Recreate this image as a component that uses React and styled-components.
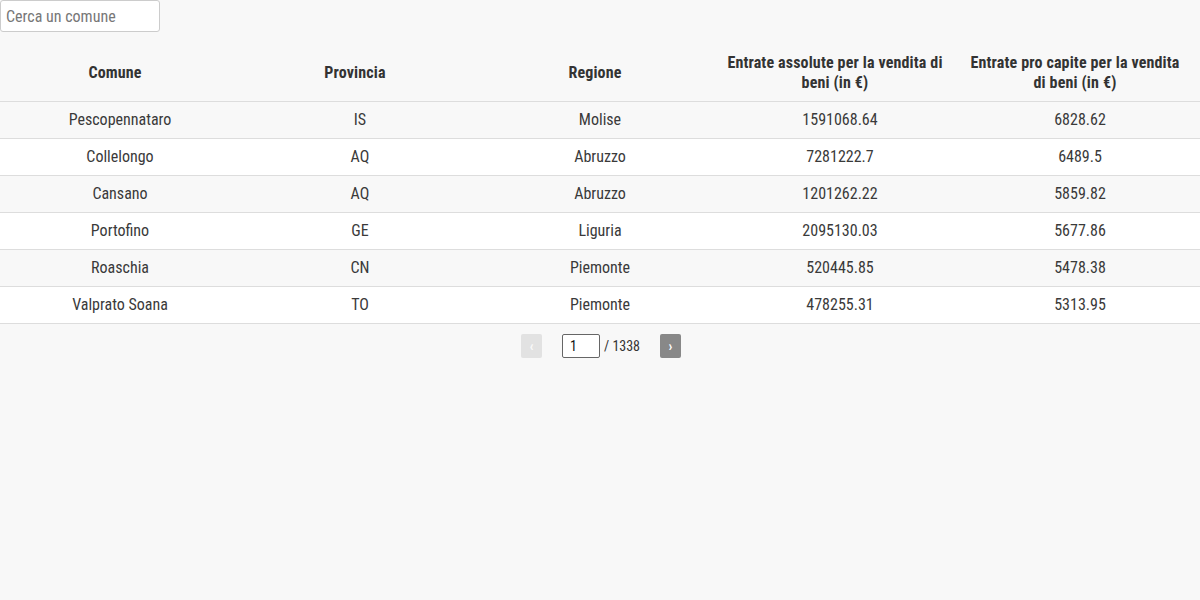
import React, { useState } from 'react';
import styled, { createGlobalStyle } from 'styled-components';

const GlobalStyle = createGlobalStyle`
  html, body {
    margin: 0;
    padding: 0;
    background: #f8f8f8;
  }
  body {
    font-family: "Roboto Condensed", Roboto, "Liberation Sans", sans-serif;
    font-stretch: 75%;
    color: #333;
  }
`;

const Page = styled.div`
  width: 1200px;
  min-height: 600px;
  background: #f8f8f8;
`;

const SearchInput = styled.input`
  display: block;
  box-sizing: border-box;
  width: 160px;
  height: 32px;
  margin: 0 0 10px;
  padding: 0 5px;
  border: 1px solid #ccc;
  border-radius: 3px;
  background: #fff;
  font-family: inherit;
  font-stretch: 75%;
  font-size: 16px;
  color: #333;

  &::placeholder {
    color: #777;
  }
`;

const Table = styled.table`
  width: 100%;
  border-collapse: collapse;
  table-layout: fixed;
`;

const HeadCell = styled.th`
  box-sizing: border-box;
  height: 59px;
  padding: 3px 15px 0 5px;
  font-size: 16px;
  font-weight: 700;
  letter-spacing: 0.15px;
  line-height: 20px;
  color: #333;
  text-align: center;
  border-bottom: 1px solid #ddd;
`;

const Row = styled.tr`
  background: ${(p) => (p.$odd ? '#fff' : '#f8f8f8')};
  border-bottom: 1px solid #ddd;
`;

const Cell = styled.td`
  box-sizing: border-box;
  height: 37px;
  padding: 0 5px;
  font-size: 16px;
  color: #3a3a3a;
  text-align: center;
`;

const Pager = styled.div`
  display: flex;
  align-items: center;
  justify-content: center;
  padding-top: 10px;
  padding-left: 2px;
  font-size: 14px;
  color: #333;
`;

const PageButton = styled.button`
  box-sizing: border-box;
  width: 21px;
  height: 24px;
  padding: 0;
  border: none;
  border-radius: 2px;
  background: ${(p) => (p.disabled ? '#e2e2e2' : '#888')};
  color: ${(p) => (p.disabled ? '#fafafa' : '#fff')};
  font-family: inherit;
  font-size: 14px;
  font-weight: 700;
  cursor: ${(p) => (p.disabled ? 'default' : 'pointer')};
`;

const PageInput = styled.input`
  box-sizing: border-box;
  width: 38px;
  height: 24px;
  margin-left: 20px;
  padding: 0 7px;
  border: 1px solid #666;
  border-radius: 2px;
  background: #fff;
  font-family: inherit;
  font-stretch: 75%;
  font-size: 14px;
  color: #111;
  outline: none;
`;

const Total = styled.span`
  margin: 0 20px 0 4px;
`;

const rows = [
  ['Pescopennataro', 'IS', 'Molise', '1591068.64', '6828.62'],
  ['Collelongo', 'AQ', 'Abruzzo', '7281222.7', '6489.5'],
  ['Cansano', 'AQ', 'Abruzzo', '1201262.22', '5859.82'],
  ['Portofino', 'GE', 'Liguria', '2095130.03', '5677.86'],
  ['Roaschia', 'CN', 'Piemonte', '520445.85', '5478.38'],
  ['Valprato Soana', 'TO', 'Piemonte', '478255.31', '5313.95'],
];

export default function App() {
  const [page, setPage] = useState('1');
  return (
    <Page>
      <GlobalStyle />
      <SearchInput placeholder="Cerca un comune" />
      <Table>
        <thead>
          <tr>
            <HeadCell>Comune</HeadCell>
            <HeadCell>Provincia</HeadCell>
            <HeadCell>Regione</HeadCell>
            <HeadCell>Entrate assolute per la vendita di beni (in €)</HeadCell>
            <HeadCell>Entrate pro capite per la vendita di beni (in €)</HeadCell>
          </tr>
        </thead>
        <tbody>
          {rows.map((r, i) => (
            <Row key={r[0]} $odd={i % 2 === 1}>
              {r.map((v, j) => (
                <Cell key={j}>{v}</Cell>
              ))}
            </Row>
          ))}
        </tbody>
      </Table>
      <Pager>
        <PageButton disabled>‹</PageButton>
        <PageInput value={page} onChange={(e) => setPage(e.target.value)} />
        <Total>/ 1338</Total>
        <PageButton>›</PageButton>
      </Pager>
    </Page>
  );
}
